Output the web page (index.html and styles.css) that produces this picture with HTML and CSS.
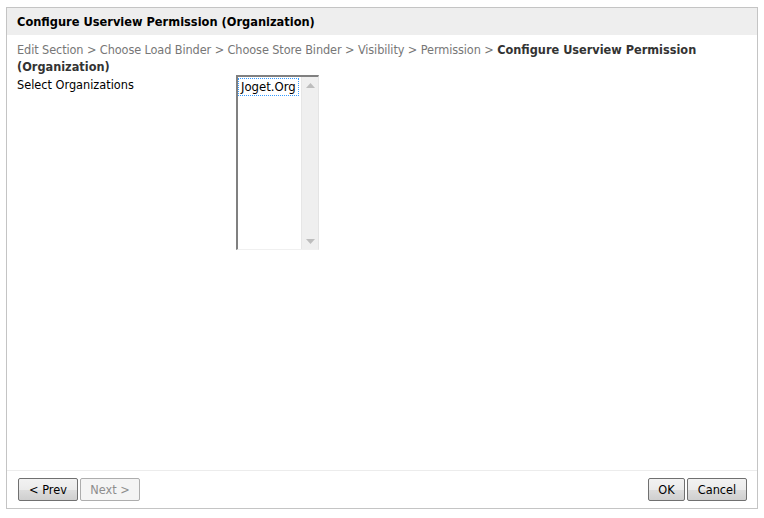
FILE: index.html
```html
<!DOCTYPE html>
<html>
<head>
<meta charset="utf-8">
<link rel="stylesheet" href="styles.css">
</head>
<body>
<div class="dialog">
  <div class="header">Configure Userview Permission (Organization)</div>
  <div class="content">
    <div class="crumbs">Edit Section &gt; Choose Load Binder &gt; Choose Store Binder &gt; Visibility &gt; Permission &gt; <b>Configure Userview Permission</b> <b>(Organization)</b></div>
    <div class="row">
      <div class="label">Select Organizations</div>
      <div class="listbox">
        <div class="options"><span class="opt">Joget.Org</span></div>
        <div class="scroll">
          <svg class="arr up" width="9" height="5" viewBox="0 0 9 5"><path d="M4.5 0 L9 5 L0 5 Z" fill="#bdbdbd"/></svg>
          <svg class="arr down" width="9" height="5" viewBox="0 0 9 5"><path d="M0 0 L9 0 L4.5 5 Z" fill="#bdbdbd"/></svg>
        </div>
      </div>
    </div>
  </div>
  <div class="footer">
    <div class="group">
      <button class="btn prev">&lt; Prev</button>
      <button class="btn disabled">Next &gt;</button>
    </div>
    <div class="group">
      <button class="btn ok">OK</button>
      <button class="btn cancel">Cancel</button>
    </div>
  </div>
</div>
</body>
</html>
```

FILE: styles.css
```css
html, body {
  margin: 0;
  padding: 0;
  background: #fff;
}
body {
  font-family: "DejaVu Sans Condensed", "DejaVu Sans", sans-serif;
  font-size: 12.6px;
  color: #000;
}
.dialog {
  margin: 7px 0 0 6px;
  width: 750px;
  height: 500px;
  border: 1px solid #c4c4c4;
  display: flex;
  flex-direction: column;
}
.header {
  background: #eeeeee;
  height: 27px;
  line-height: 27px;
  padding-left: 10px;
  font-weight: bold;
  font-size: 12.7px;
}
.content {
  flex: 1;
  padding: 6px 10px 0 10px;
}
.crumbs {
  color: #777;
  line-height: 17px;
  letter-spacing: -0.1px;
}
.crumbs b {
  color: #333;
  letter-spacing: 0;
}
.row {
  display: flex;
}
.label {
  width: 219px;
  line-height: 17px;
  margin-top: 1px;
}
.listbox {
  margin-top: 0;
  width: 80px;
  height: 172px;
  border-left: 2px solid #808080;
  border-top: 2px solid #808080;
  border-right: 1px solid #e4e4e4;
  border-bottom: 1px solid #f0f0f0;
  display: flex;
  background: #fff;
}
.options {
  flex: 1;
  padding: 2px 0 0 1px;
}
.opt {
  display: inline-block;
  padding: 0 2px;
  line-height: 16px;
  font-size: 13px;
  outline: 1px dotted #3399ff;
  color: #000;
}
.scroll {
  width: 16px;
  background: #efefef;
  border-left: 1px solid #e6e6e6;
  display: flex;
  flex-direction: column;
  justify-content: space-between;
  align-items: center;
  padding: 6px 0 5px;
}
.footer {
  border-top: 1px solid #ececec;
  height: 37px;
  display: flex;
  justify-content: space-between;
  align-items: center;
  padding: 0 10px 0 11px;
}
.group {
  display: flex;
  gap: 2px;
}
.btn {
  font-family: inherit;
  font-size: 12.6px;
  height: 23px;
  padding: 0;
  border: 1px solid #707070;
  border-radius: 2px;
  background: linear-gradient(#f2f2f2 0%, #ebebeb 50%, #dddddd 51%, #cfcfcf 100%);
  color: #000;
}
.prev { width: 60px; }
.disabled {
  width: 60px;
  color: #8d8d8d;
  border-color: #adadad;
  background: #f4f4f4;
}
.ok { width: 37px; }
.cancel { width: 60px; }
```
